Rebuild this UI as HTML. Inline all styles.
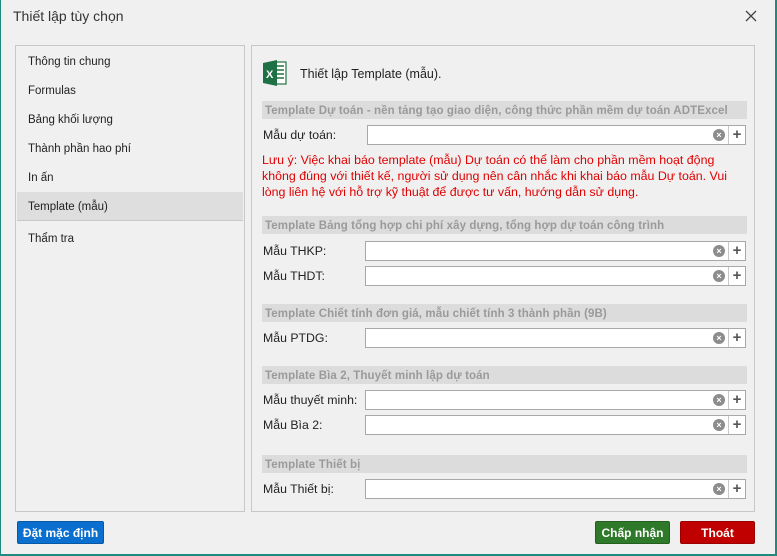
<!DOCTYPE html>
<html><head><meta charset="utf-8"><style>
*{box-sizing:border-box;margin:0;padding:0}
body{width:777px;height:556px;background:#f0f0f0;font-family:"Liberation Sans",Tahoma,sans-serif;font-size:12px;color:#222;position:relative;overflow:hidden}
.a{position:absolute;white-space:nowrap}
.frame{position:absolute;left:0;top:0;width:777px;height:556px;border-left:1px solid #1f8a7e;border-right:2px solid #1f8a7e;border-bottom:2px solid #1f8a7e}
.panel{position:absolute;border:1px solid #c8c8c8;background:#f0f0f0}
.item{position:absolute;left:28px;font-size:11.5px;color:#222}
.hdr{position:absolute;left:262px;width:485px;height:18px;background:#dcdcdc;color:#9a9a9a;font-weight:bold;font-size:11.5px;letter-spacing:0.1px;line-height:20px;padding-left:3px}
.lbl{position:absolute;left:263px;font-size:12.3px;color:#222}
.inp{position:absolute;height:20px;background:#fff;border:1px solid #a8a8a8}
.inp .c{position:absolute;right:20px;top:3px;width:12px;height:12px;border-radius:50%;background:#8c8c8c;color:#fff;font-size:9px;line-height:12px;text-align:center;font-weight:bold}
.inp .p{position:absolute;right:0;top:0;width:17px;height:18px;border-left:1px solid #c8c8c8;color:#555;font-size:15px;line-height:17px;text-align:center;font-weight:bold}
.btn{position:absolute;top:521px;height:23px;color:#fff;font-weight:bold;font-size:12px;line-height:23px;text-align:center;border-radius:2px}
</style></head><body>
<div class="frame"></div>
<div class="a" style="left:13px;top:8px;font-size:14px;color:#333">Thiết lập tùy chọn</div>
<svg class="a" style="left:745px;top:10px" width="12" height="12"><path d="M1 1L11 11M11 1L1 11" stroke="#444" stroke-width="1.3"/></svg>

<div class="panel" style="left:15px;top:45px;width:230px;height:467px"></div>
<div class="item" style="top:56px">Thông tin chung</div>
<div class="item" style="top:85px">Formulas</div>
<div class="item" style="top:114px">Bảng khối lượng</div>
<div class="item" style="top:143px">Thành phần hao phí</div>
<div class="item" style="top:172px">In ấn</div>
<div class="a" style="left:17px;top:192px;width:226px;height:29px;background:#dedede;border-bottom:1px solid #c8c8c8"></div>
<div class="item" style="top:201px">Template (mẫu)</div>
<div class="item" style="top:233px">Thẩm tra</div>

<div class="panel" style="left:251px;top:45px;width:504px;height:467px"></div>
<svg class="a" style="left:263px;top:60px" width="30" height="27">
<rect x="12" y="2" width="11" height="22" fill="#fff" stroke="#21733f" stroke-width="1.2"/>
<path d="M14 6h7M14 10h7M14 14h7M14 18h7" stroke="#21733f" stroke-width="1.5"/>
<path d="M0 3L14 0V26L0 23Z" fill="#1e7145"/>
<text x="3" y="18" fill="#fff" font-size="11" font-weight="bold" font-family="Liberation Sans">X</text>
</svg>
<div class="a" style="left:300px;top:67px;font-size:12.5px;color:#222">Thiết lập Template (mẫu).</div>

<div class="hdr" style="top:101px">Template Dự toán - nền tảng tạo giao diện, công thức phần mềm dự toán ADTExcel</div>
<div class="lbl" style="top:128px">Mẫu dự toán:</div>
<div class="inp" style="left:367px;top:125px;width:379px"><span class="c">×</span><span class="p">+</span></div>
<div class="a" style="left:262px;top:152px;color:#e00000;font-size:12.4px;line-height:16px;white-space:nowrap;width:490px">Lưu ý: Việc khai báo template (mẫu) Dự toán có thể làm cho phần mềm hoạt động<br>không đúng với thiết kế, người sử dụng nên cân nhắc khi khai báo mẫu Dự toán. Vui<br>lòng liên hệ với hỗ trợ kỹ thuật để được tư vấn, hướng dẫn sử dụng.</div>

<div class="hdr" style="top:216px">Template Bảng tổng hợp chi phí xây dựng, tổng hợp dự toán công trình</div>
<div class="lbl" style="top:244px">Mẫu THKP:</div>
<div class="inp" style="left:365px;top:241px;width:381px"><span class="c">×</span><span class="p">+</span></div>
<div class="lbl" style="top:269px">Mẫu THDT:</div>
<div class="inp" style="left:365px;top:266px;width:381px"><span class="c">×</span><span class="p">+</span></div>

<div class="hdr" style="top:304px">Template Chiết tính đơn giá, mẫu chiết tính 3 thành phần (9B)</div>
<div class="lbl" style="top:331px">Mẫu PTDG:</div>
<div class="inp" style="left:365px;top:328px;width:381px"><span class="c">×</span><span class="p">+</span></div>

<div class="hdr" style="top:366px">Template Bìa 2, Thuyết minh lập dự toán</div>
<div class="lbl" style="top:393px">Mẫu thuyết minh:</div>
<div class="inp" style="left:365px;top:390px;width:381px"><span class="c">×</span><span class="p">+</span></div>
<div class="lbl" style="top:418px">Mẫu Bìa 2:</div>
<div class="inp" style="left:365px;top:415px;width:381px"><span class="c">×</span><span class="p">+</span></div>

<div class="hdr" style="top:455px">Template Thiết bị</div>
<div class="lbl" style="top:482px">Mẫu Thiết bị:</div>
<div class="inp" style="left:365px;top:479px;width:381px"><span class="c">×</span><span class="p">+</span></div>

<div class="btn" style="left:17px;width:87px;background:#0a6fcf;border:1px solid #0858a8">Đặt mặc định</div>
<div class="btn" style="left:595px;width:75px;background:#2f7a2a;border:1px solid #245f20">Chấp nhận</div>
<div class="btn" style="left:680px;width:75px;background:#c00000;border:1px solid #9a0000">Thoát</div>
</body></html>
